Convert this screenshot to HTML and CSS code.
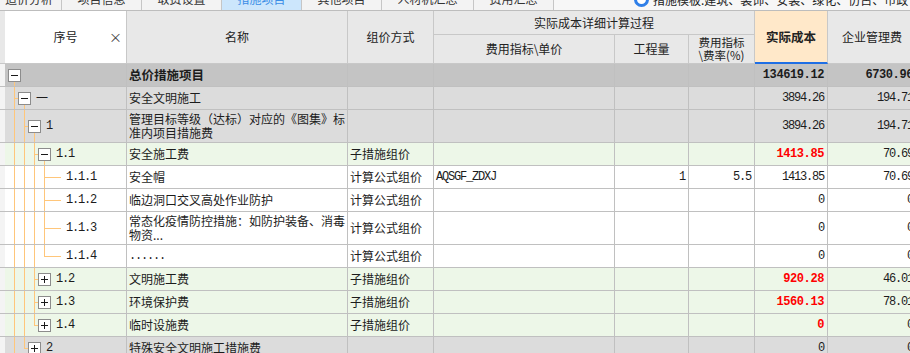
FILE: index.html
```html
<!DOCTYPE html>
<html lang="zh-CN">
<head>
<meta charset="utf-8">
<title>措施项目</title>
<link rel="stylesheet" href="styles.css">
</head>
<body>
<div class="tabs">
  <div class="tabs-inner">
    <div class="tab first">造价分析</div>
    <div class="tab">项目信息</div>
    <div class="tab">取费设置</div>
    <div class="tab active">措施项目</div>
    <div class="tab">其他项目</div>
    <div class="tab wide">人材机汇总</div>
    <div class="tab">费用汇总</div>
    <div class="notice"><span class="info-icon"></span>措施模板:建筑、装饰、安装、绿化、仿古、市政</div>
  </div>
</div>

<div class="head">
  <div class="hc strip2"></div>
  <div class="hc sp2 seq"><span></span><span class="seq-t">序号</span><span class="close">×</span></div>
  <div class="hc sp2">名称</div>
  <div class="hc sp2">组价方式</div>
  <div class="hc group">实际成本详细计算过程</div>
  <div class="hc sp2 cost">实际成本</div>
  <div class="hc sp2">企业管理费</div>
  <div class="hc">费用指标\单价</div>
  <div class="hc">工程量</div>
  <div class="hc two"><span>费用指标</span><span>\费率(%)</span></div>
</div>

<div class="body">
  <div class="row r-dark">
    <div class="c strip"></div>
    <div class="c tree"><span class="node open"><span class="box minus"></span></span></div>
    <div class="c name b">总价措施项目</div>
    <div class="c"></div><div class="c"></div><div class="c"></div><div class="c"></div>
    <div class="c num mono b">134619.12</div>
    <div class="c num mono b">6730.96</div>
  </div>

  <div class="row r-gray">
    <div class="c strip"></div>
    <div class="c tree"><span class="g t"></span><span class="node open"><span class="box minus"></span></span><span class="sn">一</span></div>
    <div class="c name">安全文明施工</div>
    <div class="c"></div><div class="c"></div><div class="c"></div><div class="c"></div>
    <div class="c num mono">3894.26</div>
    <div class="c num mono">194.71</div>
  </div>

  <div class="row r-gray tall">
    <div class="c strip"></div>
    <div class="c tree"><span class="g v"></span><span class="g t"></span><span class="node open"><span class="box minus"></span></span><span class="sn mono">1</span></div>
    <div class="c name">管理目标等级（达标）对应的《图集》标准内项目措施费</div>
    <div class="c"></div><div class="c"></div><div class="c"></div><div class="c"></div>
    <div class="c num mono">3894.26</div>
    <div class="c num mono">194.71</div>
  </div>

  <div class="row r-green">
    <div class="c strip"></div>
    <div class="c tree"><span class="g v"></span><span class="g v"></span><span class="g t"></span><span class="node open"><span class="box minus"></span></span><span class="sn mono">1.1</span></div>
    <div class="c name">安全施工费</div>
    <div class="c">子措施组价</div>
    <div class="c"></div><div class="c"></div><div class="c"></div>
    <div class="c num mono b red">1413.85</div>
    <div class="c num mono">70.69</div>
  </div>

  <div class="row">
    <div class="c strip"></div>
    <div class="c tree"><span class="g v"></span><span class="g v"></span><span class="g v"></span><span class="g t"></span><span class="node leaf"></span><span class="sn mono">1.1.1</span></div>
    <div class="c name">安全帽</div>
    <div class="c">计算公式组价</div>
    <div class="c mono">AQSGF_ZDXJ</div>
    <div class="c num mono">1</div>
    <div class="c num mono">5.5</div>
    <div class="c num mono">1413.85</div>
    <div class="c num mono">70.69</div>
  </div>

  <div class="row">
    <div class="c strip"></div>
    <div class="c tree"><span class="g v"></span><span class="g v"></span><span class="g v"></span><span class="g t"></span><span class="node leaf"></span><span class="sn mono">1.1.2</span></div>
    <div class="c name">临边洞口交叉高处作业防护</div>
    <div class="c">计算公式组价</div>
    <div class="c"></div><div class="c"></div><div class="c"></div>
    <div class="c num mono">0</div>
    <div class="c num mono">0</div>
  </div>

  <div class="row tall">
    <div class="c strip"></div>
    <div class="c tree"><span class="g v"></span><span class="g v"></span><span class="g v"></span><span class="g t"></span><span class="node leaf"></span><span class="sn mono">1.1.3</span></div>
    <div class="c name">常态化疫情防控措施：如防护装备、消毒物资...</div>
    <div class="c">计算公式组价</div>
    <div class="c"></div><div class="c"></div><div class="c"></div>
    <div class="c num mono">0</div>
    <div class="c num mono">0</div>
  </div>

  <div class="row">
    <div class="c strip"></div>
    <div class="c tree"><span class="g v"></span><span class="g v"></span><span class="g v"></span><span class="g l"></span><span class="node leaf"></span><span class="sn mono">1.1.4</span></div>
    <div class="c name mono">......</div>
    <div class="c">计算公式组价</div>
    <div class="c"></div><div class="c"></div><div class="c"></div>
    <div class="c num mono">0</div>
    <div class="c num mono">0</div>
  </div>

  <div class="row r-green">
    <div class="c strip"></div>
    <div class="c tree"><span class="g v"></span><span class="g v"></span><span class="g t"></span><span class="node"><span class="box plus"></span></span><span class="sn mono">1.2</span></div>
    <div class="c name">文明施工费</div>
    <div class="c">子措施组价</div>
    <div class="c"></div><div class="c"></div><div class="c"></div>
    <div class="c num mono b red">920.28</div>
    <div class="c num mono">46.01</div>
  </div>

  <div class="row r-green">
    <div class="c strip"></div>
    <div class="c tree"><span class="g v"></span><span class="g v"></span><span class="g t"></span><span class="node"><span class="box plus"></span></span><span class="sn mono">1.3</span></div>
    <div class="c name">环境保护费</div>
    <div class="c">子措施组价</div>
    <div class="c"></div><div class="c"></div><div class="c"></div>
    <div class="c num mono b red">1560.13</div>
    <div class="c num mono">78.01</div>
  </div>

  <div class="row r-green">
    <div class="c strip"></div>
    <div class="c tree"><span class="g v"></span><span class="g v"></span><span class="g l"></span><span class="node"><span class="box plus"></span></span><span class="sn mono">1.4</span></div>
    <div class="c name">临时设施费</div>
    <div class="c">子措施组价</div>
    <div class="c"></div><div class="c"></div><div class="c"></div>
    <div class="c num mono b red">0</div>
    <div class="c num mono">0</div>
  </div>

  <div class="row r-gray">
    <div class="c strip"></div>
    <div class="c tree"><span class="g v"></span><span class="g l"></span><span class="node"><span class="box plus"></span></span><span class="sn mono">2</span></div>
    <div class="c name">特殊安全文明施工措施费</div>
    <div class="c"></div><div class="c"></div><div class="c"></div><div class="c"></div>
    <div class="c num mono">0</div>
    <div class="c num mono">0</div>
  </div>
</div>
</body>
</html>
```

FILE: styles.css
```css
:root {
  --cols: 5px 122px 221px 86px 181px 74px 66px 73px 89px;
  --grid: #c0c0c0;
  --tree: #ffc67a;
}

* { box-sizing: border-box; }

html, body {
  margin: 0;
  padding: 0;
}

body {
  width: 910px;
  height: 353px;
  overflow: hidden;
  background: #ffffff;
  font-family: "Noto Sans CJK SC", "Noto Sans", sans-serif;
  font-size: 12px;
  color: #1c1c1c;
}

/* ---------- tab bar (scrolled, only lower part visible) ---------- */
.tabs {
  height: 11px;
  overflow: hidden;
  background: #f7f7f7;
  border-bottom: 1px solid #bdbdbd;
}

.tabs-inner {
  display: flex;
  height: 22px;
  margin-top: -12px;
}

.tab {
  flex: none;
  width: 80px;
  display: flex;
  align-items: center;
  justify-content: center;
  background: #f3f3f3;
  border-right: 1px solid #c6c6c6;
  color: #333333;
  font-size: 12px;
  line-height: 14px;
}

.tab.first {
  width: 62px;
  justify-content: flex-end;
  padding-right: 8px;
}

.tab.wide { width: 92px; }

.tab.active {
  background: #cce6fc;
  color: #3b8de6;
}

.notice {
  display: flex;
  align-items: center;
  margin-left: 80px;
  gap: 4px;
  color: #222222;
  white-space: nowrap;
}

.info-icon {
  width: 15px;
  height: 15px;
  border-radius: 50%;
  border: 3px solid #2f7fe8;
  background: #ffffff;
}

/* ---------- header ---------- */
.head {
  display: grid;
  grid-template-columns: var(--cols);
  grid-template-rows: 24px 29px;
  background: #e8e8e8;
}

.hc {
  display: flex;
  align-items: center;
  justify-content: center;
  text-align: center;
  border-right: 1px solid #c8c8c8;
  border-bottom: 1px solid #c8c8c8;
  color: #222222;
  line-height: 14px;
  white-space: nowrap;
}

.sp2 { grid-row: span 2; }

.strip2 {
  grid-row: span 2;
  border-right: none;
}

.group { grid-column: span 3; }

.seq {
  display: grid;
  grid-template-columns: 1fr auto 1fr;
  align-items: center;
  background: #ffffff;
}

.seq .close {
  justify-self: end;
  padding-right: 4px;
  color: #444444;
  font-size: 13px;
}

.cost {
  background: #ffe8c9;
  font-weight: bold;
  font-size: 12.5px;
  border-bottom: 2px solid #1f6fe5;
}

.two {
  flex-direction: column;
  line-height: 13px;
  font-size: 11.5px;
}

/* ---------- body rows ---------- */
.row {
  display: grid;
  grid-template-columns: var(--cols);
  height: 23px;
  border-bottom: 1px solid var(--grid);
  background: #ffffff;
}

.row.tall { height: 33px; }

.r-dark { background: #c4c4c4; }
.r-gray { background: #dcdcdc; }
.r-green { background: #edf7e8; }

.c {
  display: flex;
  align-items: center;
  padding: 0 2px;
  border-right: 1px solid var(--grid);
  line-height: 14px;
  white-space: nowrap;
  overflow: hidden;
}

.c.strip {
  background: #f4f4f4;
  border-right: none;
  padding: 0;
}

.c.name {
  white-space: normal;
  padding-right: 0;
}

.c.num {
  justify-content: flex-end;
  padding-right: 3px;
}

.mono {
  font-family: "Liberation Mono", "DejaVu Sans Mono", "Noto Sans CJK SC", monospace;
  font-size: 12px;
  letter-spacing: -1.2px;
}

.b { font-weight: bold; }
.mono.b { letter-spacing: -0.4px; }
.name.b { font-size: 12.5px; }

.red { color: #ff0000; }

/* ---------- tree column ---------- */
.c.tree {
  align-items: stretch;
  padding: 0 0 0 3px;
}

.g {
  flex: none;
  width: 10px;
  background-repeat: no-repeat;
}

.g.v {
  background-image: linear-gradient(var(--tree), var(--tree));
  background-position: 6px 0;
  background-size: 1px 100%;
}

.g.t {
  background-image: linear-gradient(var(--tree), var(--tree)), linear-gradient(var(--tree), var(--tree));
  background-position: 6px 0, 6px 50%;
  background-size: 1px 100%, 4px 1px;
}

.g.l {
  background-image: linear-gradient(var(--tree), var(--tree)), linear-gradient(var(--tree), var(--tree));
  background-position: 6px 0, 6px 50%;
  background-size: 1px 50%, 4px 1px;
}

.node {
  flex: none;
  width: 13px;
  display: flex;
  align-items: center;
  background-repeat: no-repeat;
}

.node.open {
  background-image: linear-gradient(var(--tree), var(--tree));
  background-position: 6px 100%;
  background-size: 1px 50%;
}

.node.leaf {
  background-image: linear-gradient(var(--tree), var(--tree));
  background-position: 0 50%;
  background-size: 13px 1px;
}

.box {
  width: 13px;
  height: 13px;
  border: 1px solid #8c8c8c;
  background-color: #ffffff;
  background-repeat: no-repeat;
}

.box.minus {
  background-image: linear-gradient(#1a1a1a, #1a1a1a);
  background-position: center;
  background-size: 7px 1px;
}

.box.plus {
  background-image: linear-gradient(#1a1a1a, #1a1a1a), linear-gradient(#1a1a1a, #1a1a1a);
  background-position: center, center;
  background-size: 7px 1px, 1px 7px;
}

.sn {
  align-self: center;
  margin-left: 5px;
}
```
